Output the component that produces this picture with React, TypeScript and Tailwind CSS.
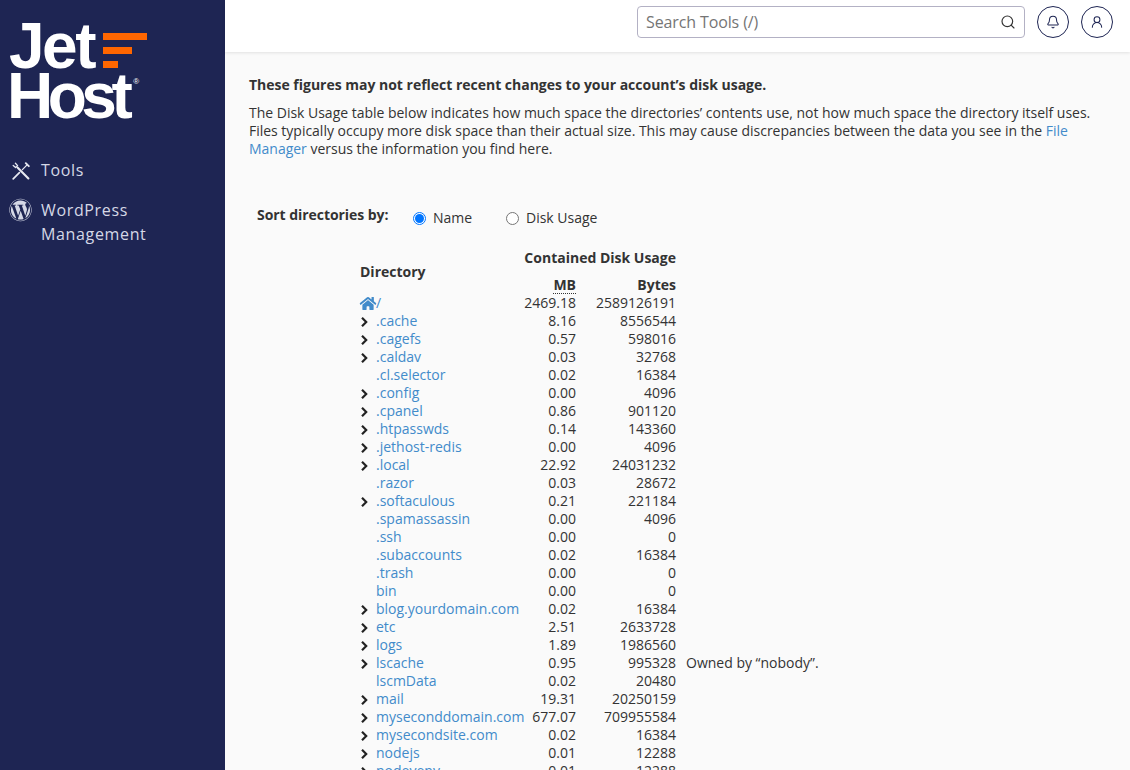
import React from "react";
import { FaHome, FaWordpress } from "react-icons/fa";
import { Bell, Search, UserRound } from "lucide-react";

type Row = [string, string, string, boolean, string?];
const rows: Row[] = [
  [".cache", "8.16", "8556544", true],
  [".cagefs", "0.57", "598016", true],
  [".caldav", "0.03", "32768", true],
  [".cl.selector", "0.02", "16384", false],
  [".config", "0.00", "4096", true],
  [".cpanel", "0.86", "901120", true],
  [".htpasswds", "0.14", "143360", true],
  [".jethost-redis", "0.00", "4096", true],
  [".local", "22.92", "24031232", true],
  [".razor", "0.03", "28672", false],
  [".softaculous", "0.21", "221184", true],
  [".spamassassin", "0.00", "4096", false],
  [".ssh", "0.00", "0", false],
  [".subaccounts", "0.02", "16384", false],
  [".trash", "0.00", "0", false],
  ["bin", "0.00", "0", false],
  ["blog.yourdomain.com", "0.02", "16384", true],
  ["etc", "2.51", "2633728", true],
  ["logs", "1.89", "1986560", true],
  ["lscache", "0.95", "995328", true, "Owned by “nobody”."],
  ["lscmData", "0.02", "20480", false],
  ["mail", "19.31", "20250159", true],
  ["myseconddomain.com", "677.07", "709955584", true],
  ["mysecondsite.com", "0.02", "16384", true],
  ["nodejs", "0.01", "12288", true],
  ["nodevenv", "0.01", "12288", true],
];

function ToolsIcon() {
  return (
    <svg viewBox="0 0 18 18" className="h-[18px] w-[18px]" fill="none" stroke="#e8eaf2" strokeLinecap="round" strokeLinejoin="round">
      <path d="M1.2 16.8 7.4 10.6" strokeWidth="1.7" />
      <path d="M10.4 7.6 14.6 3.4" strokeWidth="1.3" />
      <path d="M13.8 1.2 16.8 4.2" strokeWidth="1.9" />
      <path d="M5.5 5.5 16.4 16.4" strokeWidth="2.1" />
      <path d="M1.2 3.4 3.6 5.6 5.6 3.6 3.4 1.2" strokeWidth="1.3" />
    </svg>
  );
}

function Chevron() {
  return (
    <svg viewBox="0 0 7 10" className="ml-[1px] h-[10px] w-[7px] translate-y-[1px]" fill="none" stroke="#222222" strokeWidth="2.2">
      <path d="M1 .8 5.2 5 1 9.2" />
    </svg>
  );
}

export default function App() {
  return (
    <div className="flex h-screen overflow-hidden bg-[#fafafa] font-['Open_Sans',sans-serif] text-[14px] text-[#333333]">
      <aside className="flex w-[225px] shrink-0 flex-col bg-[#1e2553]">
        <div className="flex h-[158px] flex-col pl-[9px] pt-[14px] font-['Liberation_Sans',sans-serif] font-bold text-white">
          <div className="flex h-[50px] items-start">
            <span className="text-[64px] leading-[64px] tracking-[-2.5px]">Jet</span>
            <div className="ml-[9px] mt-[19px] flex flex-col gap-[7px]">
              <div className="h-[7px] w-[44px] bg-[#ff6600]" />
              <div className="h-[7px] w-[29px] bg-[#ff6600]" />
              <div className="h-[7px] w-[15px] bg-[#ff6600]" />
            </div>
          </div>
          <div className="-ml-[2px] flex h-[50px] items-start">
            <span className="text-[64px] leading-[64px] tracking-[-5.5px]">Host</span>
            <span className="ml-[6px] mt-[12px] text-[8px] leading-[12px] font-normal">®</span>
          </div>
        </div>
        <nav className="flex flex-col gap-[16px] pl-[10px] text-[16px] leading-[24px] tracking-[0.65px] text-[#d5d8e6]">
          <div className="flex items-start gap-[10px]">
            <span className="flex h-[24px] w-[21px] items-center justify-center pl-[1px] pt-[2px]"><ToolsIcon /></span>
            <span>Tools</span>
          </div>
          <div className="flex items-start gap-[8px]">
            <span className="-ml-[1px] mr-[1px] flex h-[24px] w-[23px] items-center justify-center"><FaWordpress className="h-[24px] w-[24px]" /></span>
            <span>WordPress<br />Management</span>
          </div>
        </nav>
      </aside>
      <div className="flex min-w-0 flex-1 flex-col">
        <header className="flex h-[52px] shrink-0 items-start justify-end gap-[12px] bg-white pr-[17px] pt-[6px] shadow-[0_1px_3px_rgba(0,0,0,0.1)]">
          <div className="flex h-[32px] w-[388px] items-center justify-between rounded-[4px] border border-[#b3b1c4] px-[8px] text-[16px] tracking-[-0.12px] text-[#757575]">
            <span>Search Tools (/)</span>
            <Search className="h-[16px] w-[16px] text-[#333333]" strokeWidth={1.75} />
          </div>
          <div className="flex h-[32px] w-[32px] items-center justify-center rounded-full border border-[#1e2553] text-[#1e2553]"><Bell className="h-[14px] w-[14px]" strokeWidth={1.75} /></div>
          <div className="flex h-[32px] w-[32px] items-center justify-center rounded-full border border-[#1e2553] text-[#1e2553]"><UserRound className="h-[14px] w-[14px]" strokeWidth={1.75} /></div>
        </header>
        <main className="flex flex-col pl-[24px] pr-[24px] pt-[24px]">
          <p className="font-bold leading-[18px] tracking-[-0.014px]">These figures may not reflect recent changes to your account’s disk usage.</p>
          <p className="mt-[10px] w-[860px] leading-[18px] tracking-[-0.015px]">
            The Disk Usage table below indicates how much space the directories’ contents use, not how much space the directory itself uses. Files typically occupy more disk space than their actual size. This may cause discrepancies between the data you see in the <a className="text-[#428bca]">File Manager</a> versus the information you find here.
          </p>
          <div className="mt-[47px] flex items-start pl-[8px]">
            <span className="w-[156px] font-bold leading-[20px] tracking-[-0.05px]">Sort directories by:</span>
            <label className="mt-[3px] flex w-[93px] items-center gap-[7px] leading-[20px]">
              <span className="flex h-[13px] w-[13px] items-center justify-center rounded-full border border-[#0075ff] bg-white"><span className="h-[9px] w-[9px] rounded-full bg-[#0075ff]" /></span>
              Name
            </label>
            <label className="mt-[3px] flex items-center gap-[7px] leading-[20px]">
              <span className="h-[13px] w-[13px] rounded-full border border-[#767676] bg-white" />
              Disk Usage
            </label>
          </div>
          <div className="ml-[111px] mt-[21px] flex flex-col leading-[18px]">
            <div className="flex h-[45px] font-bold">
              <div className="flex w-[164px] items-center pt-[1px]">Directory</div>
              <div className="flex w-[152px] flex-col items-end">
                <span className="h-[27px] whitespace-nowrap">Contained Disk Usage</span>
                <div className="flex">
                  <span className="border-b border-dotted border-[#333333] leading-[17px]">MB</span>
                  <span className="w-[100px] text-right">Bytes</span>
                </div>
              </div>
            </div>
            <div className="flex h-[18px]">
              <div className="flex w-[164px] items-center text-[#428bca]"><FaHome className="h-[15px] w-[17px] -translate-x-[0.5px]" /><span className="-ml-[1px]">/</span></div>
              <div className="w-[52px] text-right">2469.18</div>
              <div className="w-[100px] text-right">2589126191</div>
            </div>
            {rows.map(([name, mb, bytes, arrow, note]) => (
              <div key={name} className="flex h-[18px] shrink-0">
                <div className="flex w-[16px] items-center">
                  {arrow && <Chevron />}
                </div>
                <div className="w-[148px] whitespace-nowrap text-[#428bca]">{name}</div>
                <div className="w-[52px] text-right">{mb}</div>
                <div className="w-[100px] text-right">{bytes}</div>
                {note && <div className="ml-[10px] whitespace-nowrap">{note}</div>}
              </div>
            ))}
          </div>
        </main>
      </div>
    </div>
  );
}
